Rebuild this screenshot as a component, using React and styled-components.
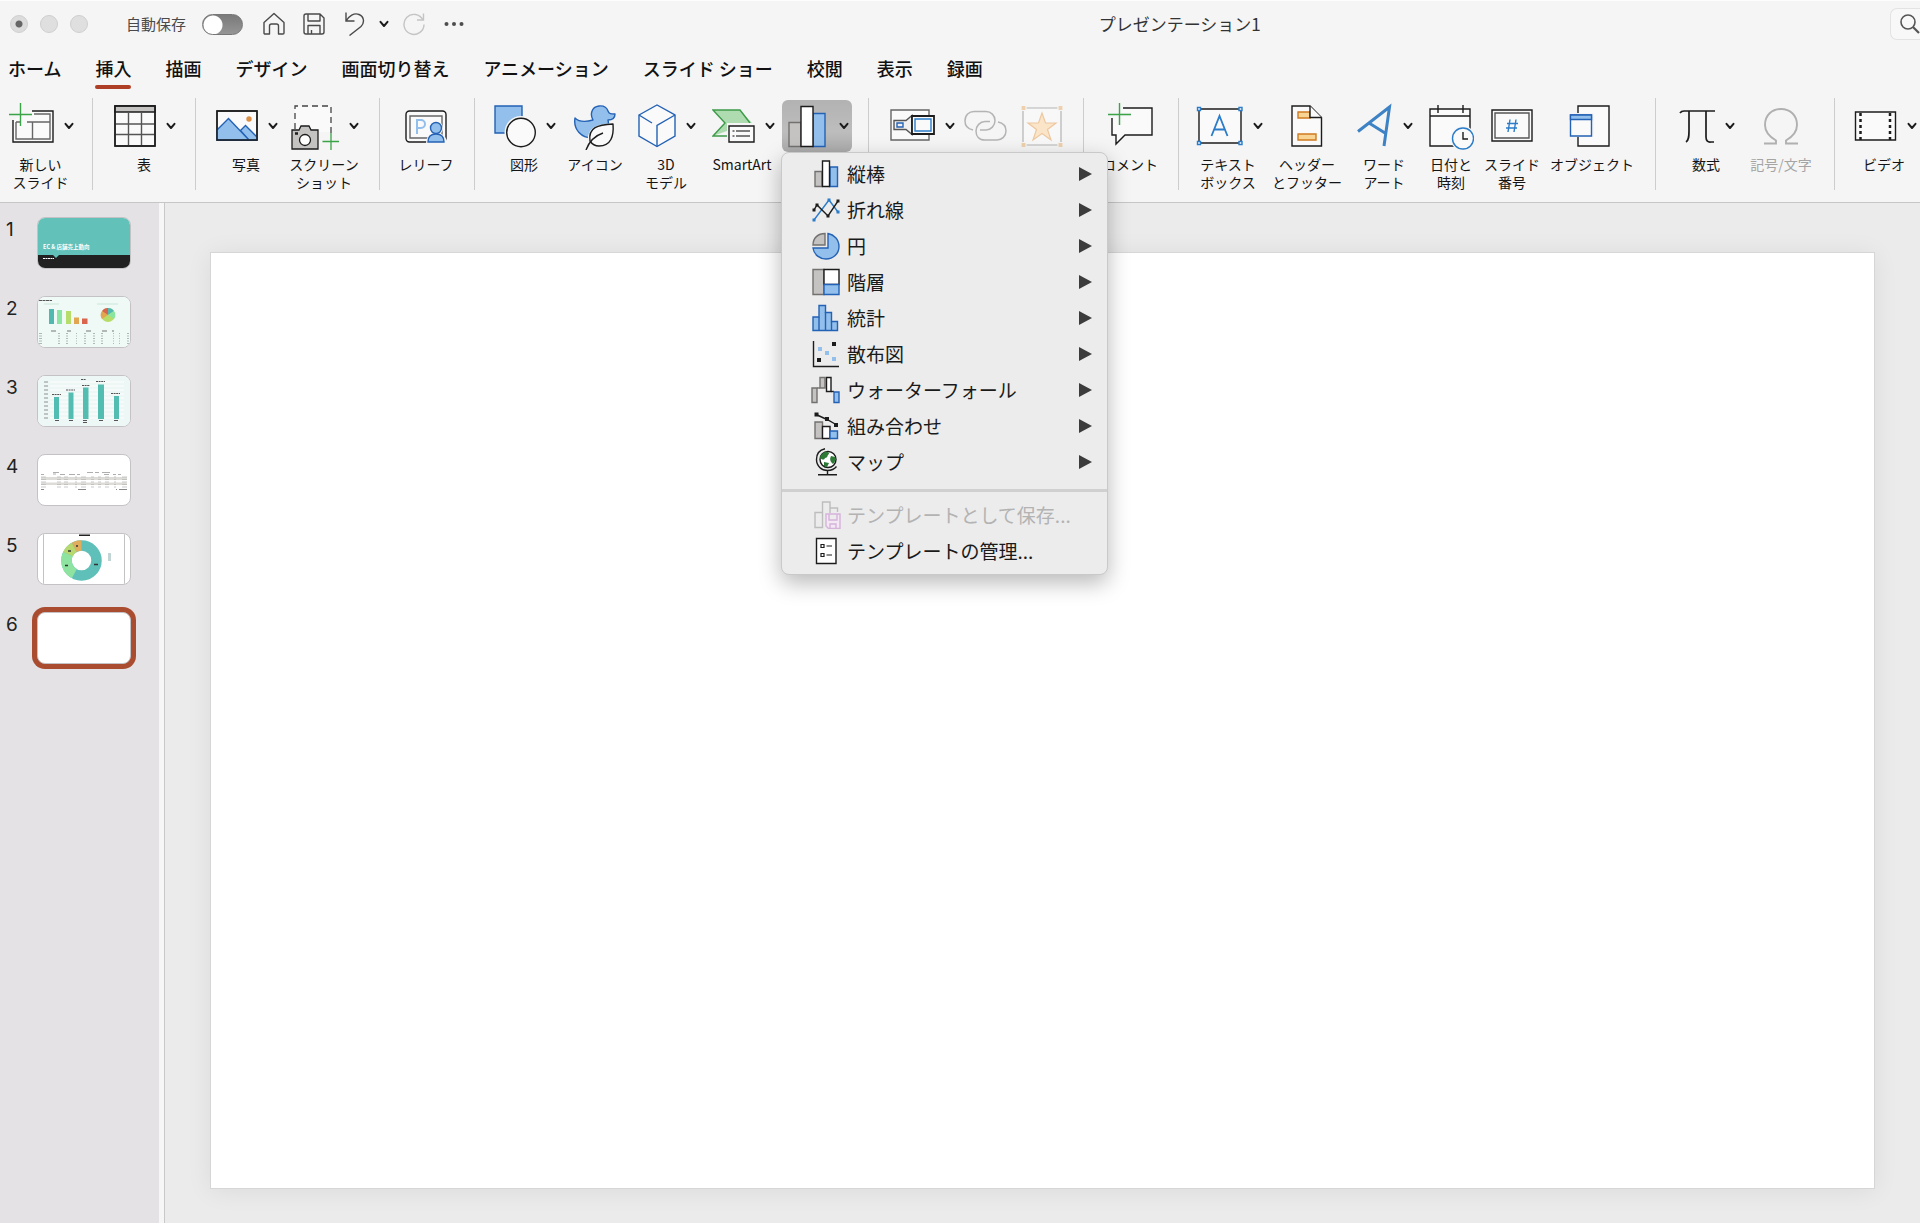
import React from "react";
import styled, { createGlobalStyle, css } from "styled-components";

const Global = createGlobalStyle`
  *, *::before, *::after { box-sizing: border-box; }
  body { margin: 0; background: #f5f5f5; }
  button { font: inherit; color: inherit; background: none; border: 0; padding: 0; margin: 0; }
  svg { display: block; flex: none; }
`;

const Page = styled.div`
  display: flex;
  flex-direction: column;
  height: 100vh;
  overflow: hidden;
  background: #f5f5f5;
  color: #1a1a1a;
  font-family: "Noto Sans CJK JP", "Liberation Sans", sans-serif;
`;

/* ---------- title bar ---------- */
const TitleBar = styled.header`
  display: grid;
  grid-template-columns: 5fr auto 3fr;
  align-items: center;
  height: 47px;
  flex: none;
  border-top: 1px solid #fdfdfd;
`;
const TitleLeft = styled.div`
  display: flex;
  align-items: center;
  padding-left: 10px;
`;
const Lights = styled.div`
  display: flex;
  gap: 12px;
  margin-right: 38px;
`;
const Light = styled.button`
  width: 18px;
  height: 18px;
  border-radius: 50%;
  background: ${(p) => (p.$dot ? "radial-gradient(circle, #666 3px, #dcdcdc 4px)" : "#dfdfdf")};
  border: 1px solid #cfcfcf;
`;
const AutoSave = styled.label`
  display: flex;
  align-items: center;
  gap: 16px;
  font-size: 15px;
  line-height: 20px;
  color: #4a4a4a;
`;
const Toggle = styled.input`
  appearance: none;
  margin: 0;
  width: 41px;
  height: 21px;
  border-radius: 11px;
  background: radial-gradient(circle at 10px 10px, #fff 9px, transparent 10px),
    linear-gradient(#7a7a7a, #959595);
  border: 1px solid #777;
`;
const QuickBar = styled.div`
  display: flex;
  align-items: center;
  margin-left: 11px;
`;
const QuickButton = styled.button`
  display: flex;
  justify-content: center;
  width: ${(p) => (p.$narrow ? "20px" : "40px")};
`;
const DocTitle = styled.h1`
  margin: 0;
  font-size: 17px;
  line-height: 24px;
  font-weight: 400;
  color: #333;
`;
const TitleRight = styled.div`
  display: flex;
  justify-content: flex-end;
  overflow: hidden;
`;
const SearchButton = styled.button`
  display: flex;
  align-items: center;
  width: 30px;
  height: 32px;
  padding-left: 9px;
  border: 1px solid #e3e3e3;
  border-right: 0;
  border-radius: 7px 0 0 7px;
  background: #f8f8f8;
`;

/* ---------- tabs ---------- */
const Tabs = styled.nav`
  display: flex;
  gap: 34px;
  height: 51px;
  flex: none;
  padding: 7px 8px 0;
`;
const Tab = styled.a`
  display: flex;
  flex-direction: column;
  height: 35px;
  font-size: 18px;
  line-height: 28px;
  font-weight: 500;
  color: #111;
  text-decoration: none;
  white-space: nowrap;
  ${(p) =>
    p.$active &&
    css`
      &::after {
        content: "";
        height: 4px;
        margin-top: 3px;
        border-radius: 2px;
        background: #ae3f26;
      }
    `}
`;

/* ---------- ribbon ---------- */
const Ribbon = styled.div`
  display: flex;
  height: 105px;
  flex: none;
  border-bottom: 1px solid #c6c6c6;
`;
const Group = styled.div`
  display: flex;
  flex: none;
  width: ${(p) => p.$w}px;
  height: 92px;
  padding-left: ${(p) => p.$pad || 0}px;
  border-right: ${(p) => (p.$last ? "0" : "1px solid #cdcdcd")};
`;
const ToolSlot = styled.div`
  position: relative;
  width: ${(p) => p.$w}px;
  flex: none;
`;
const Tool = styled.button`
  display: flex;
  flex-direction: column;
  align-items: center;
  width: 100%;
  font-size: 14px;
  line-height: 18px;
  text-align: center;
  white-space: pre;
  color: ${(p) => (p.$off ? "#a5a5a5" : "#141414")};
`;
const ToolIcon = styled.span`
  display: flex;
  align-items: center;
  justify-content: center;
  gap: 10px;
  width: 100%;
  height: 52px;
  margin: 2px 0 3px;
  padding-left: ${(p) => (p.$drop ? "2px" : "0")};
  ${(p) =>
    p.$pressed &&
    css`
      gap: 13px;
      border-radius: 6px;
      background: linear-gradient(#b2b2b2, #bdbdbd 60%, #ababab);
    `}
`;

/* ---------- menu ---------- */
const Menu = styled.div`
  position: absolute;
  z-index: 5;
  top: 54px;
  left: -1px;
  width: 327px;
  padding: 3px 0 5px;
  border: 1px solid #c9c9c9;
  border-radius: 8px;
  background: #ececec;
  box-shadow: 0 8px 22px rgba(0, 0, 0, 0.28);
`;
const MenuItem = styled.button`
  display: grid;
  grid-template-columns: 30px 1fr 14px;
  column-gap: 6px;
  align-items: center;
  width: 100%;
  height: 36px;
  padding: 0 15px 0 29px;
  font-size: 19px;
  line-height: 28px;
  text-align: left;
  white-space: nowrap;
  color: ${(p) => (p.$off ? "#b3b3b3" : "#1a1a1a")};
`;
const Divider = styled.hr`
  height: 3px;
  margin: 9px 0 5px;
  border: 0;
  background: #d0d0d0;
`;

/* ---------- work area ---------- */
const Work = styled.main`
  display: flex;
  flex: 1;
  min-height: 0;
`;
const Sidebar = styled.aside`
  width: 159px;
  flex: none;
  padding: 14px 0 0 6px;
  background: #e4e2e5;
`;
const Splitter = styled.div`
  width: 6px;
  flex: none;
  background: #f6f6f6;
  border-right: 1px solid #c8c8c8;
`;
const SlideList = styled.ol`
  display: flex;
  flex-direction: column;
  gap: 27px;
  margin: 0;
  padding: 0;
  list-style: none;
`;
const SlideRow = styled.li`
  display: grid;
  grid-template-columns: 31px 94px;
  height: 52px;
  font-family: Inter, "Liberation Sans", sans-serif;
  font-size: 19px;
  line-height: 26px;
  color: #222;
`;
const Thumb = styled.button`
  width: 94px;
  height: 52px;
  border: 1px solid #c4c2c5;
  border-radius: 8px;
  background: #fff;
  overflow: hidden;
  ${(p) =>
    p.$selected &&
    css`
      box-shadow: 0 0 0 5px #a94c2f;
    `}
`;
const Stage = styled.section`
  flex: 1;
  min-width: 0;
  padding: 49px 45px 34px;
  background: #ebebeb;
`;
const Slide = styled.div`
  aspect-ratio: 16 / 9;
  background: #fff;
  border: 1px solid #d6d6d6;
  box-shadow: 0 2px 24px rgba(0, 0, 0, 0.07);
`;

/* ---------- icons ---------- */
const K = "#1c1c1c";
const B = "#2462b5";
const LB = "#92bfeb";
const G = "#c4c3c1";
const GK = "#73716f";
const GREEN = "#3ba348";

const Icon = ({ w, h = 48, children, ...rest }) => (
  <svg width={w} height={h} viewBox={`0 0 ${w} ${h}`} fill="none" stroke={K} strokeWidth="1.4" aria-hidden="true" {...rest}>
    {children}
  </svg>
);
const Chevron = () => (
  <Icon w={10} h={8} strokeWidth="2" strokeLinecap="round" strokeLinejoin="round">
    <path d="M1.5 1.8 5 6l3.500-4.200" />
  </Icon>
);
const Bars = ({ w = 38, h = 48 }) => (
  <svg width={w} height={h} viewBox="0 0 38 48" fill="none" strokeWidth="1.4" aria-hidden="true">
    <path d="M1 20.500h12v24H1z" fill={G} stroke={GK} />
    <path d="M25 11.500h12v33H25z" fill={LB} stroke={B} />
    <path d="M13 4.500h12v40H13z" fill="#fff" stroke={K} />
  </svg>
);

const icons = {
  newSlide: (
    <Icon w={45}>
      <path d="M23 9h21v31H4V18" fill="#fafafa" />
      <path d="M25 12h16v25H7V20M18 20h23M23.500 20v17M7 20h4" stroke="#666" />
      <path d="M11.500 1v23M0 12.500h23" stroke={GREEN} />
    </Icon>
  ),
  table: (
    <Icon w={42}>
      <path d="M1 4h40v40H1z" fill="#fafafa" />
      <path d="M1 4h40v6H1z" fill={G} />
      <path d="M14.500 10v34M27.500 10v34M1 22h40M1 32.500h40" stroke="#555" />
      <path d="M1 4h40v40H1z" />
    </Icon>
  ),
  photo: (
    <Icon w={42}>
      <path d="M1 9h40v29H1z" fill="#fafafa" />
      <path d="m1 28 11.500-11.500L33 38H1zM24.500 28.500l5-5L41 35v3h-8z" fill={LB} stroke={B} />
      <circle cx="33" cy="17" r="2.700" fill="#dd8f45" stroke="none" />
      <path d="M1 9h40v29H1z" />
    </Icon>
  ),
  screenshot: (
    <Icon w={48} strokeWidth="1.3">
      <path d="M4 4h36v26H4z" fill="#fafafa" stroke="none" />
      <path d="M4 27V4h36v27" strokeDasharray="6 4" stroke="#444" />
      <path d="M1 28h7l2-4h8l2 4h7v19H1z" fill={G} />
      <circle cx="14" cy="38" r="5.500" fill="#fff" />
      <path d="M4 31.500h3" strokeWidth="2.500" />
      <path d="M40 31v17M31.500 39.500h17" stroke={GREEN} />
    </Icon>
  ),
  cameo: (
    <Icon w={42}>
      <rect x="1" y="9" width="40" height="31" rx="3.500" fill="#fafafa" />
      <path d="M5 14h32v22H5z" stroke="#666" />
      <path d="M12 32V18h4a4 4 0 0 1 0 8h-4" stroke={LB} strokeWidth="2" />
      <path d="M21 42c0-8 4-11 10-11s11 3 11 11z" fill="#f5f5f5" stroke="none" />
      <circle cx="31" cy="26" r="7" fill="#fafafa" stroke="none" />
      <circle cx="31" cy="26" r="5.500" fill={LB} stroke={B} />
      <path d="M23 40c0-5 3-8 8-8s8 3 8 8z" fill={LB} stroke={B} />
    </Icon>
  ),
  shapes: (
    <Icon w={42}>
      <path d="M1 4h27v27H1z" fill={LB} stroke={B} />
      <circle cx="27" cy="30.500" r="16.500" fill="#f5f5f5" stroke="none" />
      <circle cx="27" cy="30.500" r="14.300" fill="#fafafa" />
    </Icon>
  ),
  duck: (
    <Icon w={42} strokeLinejoin="round">
      <path d="M1 16c4 4 11 4 18 2-3-5-2-13 6-14 5-.5 8 2 9 5 1 3 3 3 7 3 0 4-3 6-7 6 2 8-4 18-16 18C8 36-1 28 1 16z" fill={LB} stroke={B} />
      <path d="M13 44c1-5 0-10 3-15 5-7 14-7 25-8 2 12-2 27-18 25z" fill="#f5f5f5" stroke="none" />
      <path d="M16 39c-2-14 8-16 23-17 1 12-2 22-14 22-4 0-7-2-9-5z" fill="#fafafa" />
      <path d="M12 48c3-8 8-14 17-17" />
    </Icon>
  ),
  cube: (
    <Icon w={38}>
      <path d="M1 13 19 3l18 10v21L19 44.500 1 34z" fill="#fafafa" stroke={B} />
      <path d="m1 13 13 8M37 13l-18 10.500v21" stroke={B} />
    </Icon>
  ),
  smartArt: (
    <Icon w={43}>
      <path d="M1 8h27l12 13v8H15L1 34l12-13z" fill="#aedcb0" stroke="none" />
      <path d="M38 21 28 8H1l12 13L1 34h15" stroke="#3e9b4a" />
      <path d="M15 21h28v21H15z" fill="#f5f5f5" stroke="none" />
      <path d="M17 24h25v16H17z" fill="#fafafa" />
      <path d="M20.500 29h2M20.500 34h2M24 29h14M24 34h14" stroke="#555" />
    </Icon>
  ),
  zoom: (
    <Icon w={45}>
      <path d="M1 8h38v30H1z" fill="#fafafa" stroke="#666" />
      <path d="M4 18.500h12l6-5v19l-6-5H4z" fill="#f0f0f0" stroke="#555" />
      <path d="M7 21h6v4H7z" stroke={B} />
      <path d="M22 14h22v18H22z" fill="#fafafa" strokeWidth="1.800" />
      <path d="M25 17h16v12H25z" stroke="#2b7cc9" />
    </Icon>
  ),
  link: (
    <Icon w={43} stroke="#b4b4b4" strokeWidth="1.500">
      <path d="M9 28C4 27 1 24 1 19c0-6 4-9.500 9-9.500h12c5 0 9 4 9 9s-4 9.500-9 9.500h-6" />
      <path d="M34 20c5 1 8 4 8 9 0 5-4 9-9 9H21c-6 0-9-4-9-9s4-9.500 9-9.500h5" />
    </Icon>
  ),
  action: (
    <Icon w={42} stroke="#b4b4b4" strokeWidth="1.200">
      <path d="M2 6h38v37H2z" fill="#f8f8f8" />
      <path d="m21 11 3.500 10H35l-8.500 6.500L30 38l-9-6.500L12 38l3.500-10.500L7 21h10.500z" fill="#fbe5c8" stroke="#edc8a0" />
      <path d="M0 3.500h5v5H0zM37 3.500h5v5h-5zM0 40.500h5v5H0zM37 40.500h5v5h-5z" fill="#eed0ac" stroke="#f5f5f5" />
    </Icon>
  ),
  comment: (
    <Icon w={45}>
      <path d="M15 6h29v27H17l-9 9v-9H4V16" fill="#fafafa" />
      <path d="M11.500 1v22M0 12.500h23" stroke="#f5f5f5" strokeWidth="4" />
      <path d="M11.500 1v22M0 12.500h23" stroke={GREEN} />
    </Icon>
  ),
  textBox: (
    <Icon w={47}>
      <path d="M3 7h42v34H3z" fill="#fafafa" />
      <path d="m15.500 34 8-20 8 20M18 27.500h11" stroke="#2b7cc9" strokeWidth="1.800" />
      <path d="M1.500 5.500h3v3h-3zM43 5.500h3v3h-3zM1.500 39.500h3v3h-3zM43 39.500h3v3h-3z" fill="#fff" stroke="#2b7cc9" />
    </Icon>
  ),
  header: (
    <Icon w={32}>
      <path d="M1 4h18l11.500 11.500V44H1z" fill="#fafafa" />
      <path d="M7 10h12v6H7zM7 32h18v6H7z" fill="#f8d594" stroke="#cf7b20" />
      <path d="M19 4v11.500h11.500" fill="#fafafa" />
    </Icon>
  ),
  wordArt: (
    <Icon w={36} stroke="#3c82c5" strokeWidth="3">
      <path d="M1 29.500 32.500 5 27 44M12 21l16 10" />
    </Icon>
  ),
  date: (
    <Icon w={45}>
      <path d="M1 7h40v37H1z" fill="#fafafa" />
      <path d="M1 14h40M9 3v8M34 3v8" />
      <circle cx="34" cy="36.500" r="12.500" fill="#f5f5f5" stroke="none" />
      <circle cx="34" cy="36.500" r="10.500" fill="#fafafa" stroke="#2b7cc9" />
      <path d="M34 30v7h5" />
    </Icon>
  ),
  number: (
    <Icon w={42}>
      <path d="M1 8h40v31H1z" fill="#fafafa" />
      <path d="M4 11h34v25H4z" stroke="#555" />
      <path d="M19 17.500 17 30M25 17.500 23 30M16 21.500h11M15 26h11" stroke="#2b7cc9" />
    </Icon>
  ),
  object: (
    <Icon w={46}>
      <path d="M9 4h31v40H9z" fill="#fafafa" />
      <path d="M0 11h25v24H0z" fill="#f5f5f5" stroke="none" />
      <path d="M1.500 13h21v21h-21z" fill="#fafafa" stroke={B} />
      <path d="M1.500 13h21v4.500h-21z" fill={LB} stroke={B} />
    </Icon>
  ),
  pi: (
    <Icon w={36} strokeWidth="1.700">
      <path d="M1 11c1-1.500 2-2 4-2h31M10 9v20c0 5 0 9-3 11M27 9v26c0 4 2 5.500 5 5h3" />
    </Icon>
  ),
  omega: (
    <Icon w={36} stroke="#b0b0b0" strokeWidth="1.900">
      <path d="M1 41.500h12v-3C7 35 2 30 2 23 2 13 9 7 18 7s16 6 16 16c0 7-5 12-11 15.500v3h12" />
    </Icon>
  ),
  video: (
    <Icon w={43}>
      <path d="M1.500 10h40v28h-40z" fill="#fafafa" />
      <path d="M6.500 11v27M36 11v27" strokeWidth="2.500" strokeDasharray="3 3" />
    </Icon>
  ),
};

const MIcon = ({ children }) => (
  <Icon w={30} h={28}>
    {children}
  </Icon>
);
const dots = (pts, s, fill) =>
  pts.map(([x, y], i) => <rect key={i} x={x - s / 2} y={y - s / 2} width={s} height={s} fill={fill} stroke="none" />);

const menuIcons = {
  column: (
    <MIcon>
      <path d="M4 11.500h7v15H4z" fill={G} stroke={GK} />
      <path d="M19 7h7.500v19.500H19z" fill={LB} stroke={B} />
      <path d="M11.500 1h7v25.500h-7z" fill="#fff" />
    </MIcon>
  ),
  line: (
    <MIcon>
      <path d="m3 24 15-20 9 12" stroke="#2b7cc9" />
      <path d="m3 14 3-5 11 11L27 5" />
      {dots([[3, 24], [18, 4], [27, 16]], 3, "#2b7cc9")}
      {dots([[3, 14], [6, 9], [17, 20], [27, 5]], 3, K)}
    </MIcon>
  ),
  pie: (
    <MIcon>
      <path d="M14 1.500V13H2C2 6 7 1.500 14 1.500z" fill={G} stroke={GK} />
      <path d="M17 1.500V16H2c1 7 7 11 13 11 7 0 13-5 13-12.500 0-7-5-12-11-13z" fill={LB} stroke={B} />
    </MIcon>
  ),
  tree: (
    <MIcon>
      <path d="M2 1.500h11v25H2z" fill={G} stroke={GK} />
      <path d="M13 1.500h15v15H13z" fill="#fff" />
      <path d="M13 16.500h15v10H13z" fill={LB} stroke={B} />
    </MIcon>
  ),
  histogram: (
    <MIcon>
      <path d="M2 26.500V13h6V1.500h6.500v7h6v9h6v9z" fill={LB} stroke={B} />
      <path d="M8 13v13.500M14.500 8v18.500M20.500 17v9.500" stroke={B} />
    </MIcon>
  ),
  scatter: (
    <MIcon>
      <path d="M2.500 1v25.500H28" />
      {dots([[9, 9], [16, 13], [23, 19]], 4, LB)}
      {dots([[23, 4], [8, 20]], 4, K)}
    </MIcon>
  ),
  waterfall: (
    <MIcon>
      <path d="M1 12h5v14.500H1zM9 1.500h5V12H9z" fill={G} stroke={GK} />
      <path d="M6 12h3" stroke={GK} />
      <path d="M15.500 1.500h4.500v14h-4.500z" fill="#fff" />
      <path d="M20 15.500h3" />
      <path d="M23 16h5v10.500h-5z" fill={LB} stroke={B} />
    </MIcon>
  ),
  combo: (
    <MIcon>
      <path d="M4 10h7.500v16.500H4z" fill={G} stroke={GK} />
      <path d="M11.500 14.500H19v12h-7.500z" fill="#fff" />
      <path d="M19 19h7.500v7.500H19z" fill={LB} stroke={B} />
      <path d="m5 2.500 11 5 9 5" />
      {dots([[5.500, 2.500], [16, 7], [25, 13]], 4, K)}
    </MIcon>
  ),
  map: (
    <MIcon>
      <circle cx="17" cy="11.500" r="8" fill="#fff" />
      <path d="M11 6c3-3 7-3 7 0-2 1-1 4-4 4-1 3-4 1-5 0 0-2 1-3 2-4zM20 8l4 1c1 3 0 5-2 7-2-2-4-4-2-8zM13 14l5 1-2 4-3-1z" fill="#2c7a36" stroke="none" />
      <path d="M14 .7C8 2 5.500 6.500 5.500 11.500c0 6.500 5 11 11 11 4 0 7-1.500 9-4M16.500 22.500v3.500M7 26.800h19" />
    </MIcon>
  ),
  saveTemplate: (
    <MIcon>
      <path d="M4 11.500h7.500v15H4zM11.500 12V1h7.500v11M19 7h7.500v4" stroke="#bdbdbd" />
      <path d="M15 13h14v14.500H17.500L15 25zM18 13v6h8v-6M19 27.500V23h6v4.500" fill="#f3e8f4" stroke="#d5b3da" />
    </MIcon>
  ),
  manage: (
    <MIcon>
      <path d="M5.500 1.500H25v25H5.500z" fill="#fff" />
      <path d="M10 7.500h3v3h-3zM10 16.500h3v3h-3zM15.500 9H21M15.500 18H21" strokeWidth="1.200" />
    </MIcon>
  ),
};

const Arrow = () => (
  <Icon w={14} h={16} stroke="none">
    <path d="M1 1v14l13-7z" fill="#3c3c3c" />
  </Icon>
);

const menuTop = [
  ["column", "縦棒"],
  ["line", "折れ線"],
  ["pie", "円"],
  ["tree", "階層"],
  ["histogram", "統計"],
  ["scatter", "散布図"],
  ["waterfall", "ウォーターフォール"],
  ["combo", "組み合わせ"],
  ["map", "マップ"],
];

const ChartMenu = () => (
  <Menu role="menu">
    {menuTop.map(([id, label]) => (
      <MenuItem key={id} role="menuitem">
        {menuIcons[id]}
        <span>{label}</span>
        <Arrow />
      </MenuItem>
    ))}
    <Divider />
    <MenuItem role="menuitem" disabled $off>
      {menuIcons.saveTemplate}
      <span>テンプレートとして保存...</span>
    </MenuItem>
    <MenuItem role="menuitem">
      {menuIcons.manage}
      <span>テンプレートの管理...</span>
    </MenuItem>
  </Menu>
);

const groups = [
  { w: 93, tools: [{ icon: "newSlide", label: "新しい\nスライド", w: 81, drop: true }] },
  { w: 103, tools: [{ icon: "table", label: "表", w: 102, drop: true }] },
  {
    w: 184,
    pad: 11,
    tools: [
      { icon: "photo", label: "写真", w: 78, drop: true },
      { icon: "screenshot", label: "スクリーン\nショット", w: 78, drop: true },
    ],
  },
  { w: 95, tools: [{ icon: "cameo", label: "レリーフ", w: 92 }] },
  {
    w: 394,
    pad: 13,
    tools: [
      { icon: "shapes", label: "図形", w: 72, drop: true },
      { icon: "duck", label: "アイコン", w: 70 },
      { icon: "cube", label: "3D\nモデル", w: 72, drop: true },
      { icon: "smartArt", label: "SmartArt", w: 80, drop: true },
      { icon: "chart", name: "グラフ", w: 70, drop: true, menu: true },
    ],
  },
  {
    w: 215,
    pad: 20,
    tools: [
      { icon: "zoom", name: "ズーム", w: 64, drop: true },
      { icon: "link", name: "リンク", w: 64, off: true },
      { icon: "action", name: "動作", w: 50, off: true },
    ],
  },
  { w: 95, tools: [{ icon: "comment", label: "コメント", w: 92 }] },
  {
    w: 477,
    pad: 9,
    tools: [
      { icon: "textBox", label: "テキスト\nボックス", w: 80, drop: true },
      { icon: "header", label: "ヘッダー\nとフッター", w: 78 },
      { icon: "wordArt", label: "ワード\nアート", w: 76, drop: true },
      { icon: "date", label: "日付と\n時刻", w: 58 },
      { icon: "number", label: "スライド\n番号", w: 64 },
      { icon: "object", label: "オブジェクト", w: 96 },
    ],
  },
  {
    w: 179,
    pad: 12,
    tools: [
      { icon: "pi", label: "数式", w: 76, drop: true },
      { icon: "omega", label: "記号/文字", w: 74, off: true },
    ],
  },
  { w: 98, last: true, tools: [{ icon: "video", label: "ビデオ", w: 98, drop: true }] },
];

const tabs = ["ホーム", "挿入", "描画", "デザイン", "画面切り替え", "アニメーション", "スライド ショー", "校閲", "表示", "録画"];

/* ---------- slide previews ---------- */
const Preview = ({ children }) => (
  <svg width="92" height="50" viewBox="0 0 92 50" aria-hidden="true">
    {children}
  </svg>
);
const cols = (n, from, step) => Array.from({ length: n }, (_, i) => from + i * step);

const previews = [
  <Preview>
    <path d="M0 0h92v38H0z" fill="#62c1b9" />
    <path d="M0 37h92v13H0z" fill="#212121" />
    <path d="M15 37h6l-3 3z" fill="#62c1b9" />
    <text x="5" y="31" fontSize="5.500" fontWeight="700" fill="#fff" fontFamily="Noto Sans CJK JP, sans-serif">
      EC &amp; 店舗売上動向
    </text>
    <path d="M5 40.500h11" stroke="#fff" strokeWidth="1.200" strokeDasharray="2 .5" />
  </Preview>,
  <Preview>
    <path d="M0 0h92v50H0z" fill="#effaf7" />
    <path d="M1 3.500h13" stroke="#555" strokeDasharray="3 .5" />
    <path d="M6 7h15M59 7h21" stroke="#c9e6d8" />
    <path d="M11 12h5v15h-5z" fill="#52b9b0" />
    <path d="M19 13h5v14h-5z" fill="#8be5a2" />
    <path d="M28 14h5v13h-5z" fill="#b6dc6a" />
    <path d="M36 20.500h5V27h-5z" fill="#e2a650" />
    <path d="M44 21.500h5.500V27H44z" fill="#d9654e" />
    <circle cx="70" cy="18" r="7" fill="#b6dc6a" />
    <path d="M70 18v-7a7 7 0 0 1 6 3z" fill="#52b9b0" />
    <path d="M70 18l6-4a7 7 0 0 1 0 8z" fill="#8be5a2" />
    <path d="M70 18l-6 4a7 7 0 0 1 0-8z" fill="#e2a650" />
    <path d="M70 18l-6-4a7 7 0 0 1 6-3z" fill="#d9654e" />
    <path d="M13 34h5M29 34h4M48 34h5M64 34h5M74 34h2" stroke="#777" />
    {cols(5, 36.5, 2.5).map((y) => (
      <path key={y} d={`M1 ${y}h3M20 ${y}h2M28 ${y}h2M38 ${y}h1M46 ${y}h2M55 ${y}h2M63 ${y}h2M75 ${y}h1M81 ${y}h1M89 ${y}h2`} stroke="#9aa8a4" strokeWidth=".8" />
    ))}
  </Preview>,
  <Preview>
    <path d="M0 0h92v50H0z" fill="#edf7f5" />
    {cols(10, 6, 4).map((y) => (
      <path key={y} d={`M12 ${y}h74`} stroke="#fff" />
    ))}
    {cols(10, 6, 4).map((y) => (
      <path key={`l${y}`} d={`M6 ${y}h4`} stroke="#777" strokeWidth=".8" />
    ))}
    <path d="M16 21h5v22h-5zM30.500 16.500h5V43h-5zM45 11.500h5.500V43H45zM60 8.500h6V43h-6zM76 20h5v23h-5z" fill="#53bdb2" />
    <path d="M14 18.500h9M28 14h9M44 9.500h8M58 5.500h9M73 17.500h9M43 3.500h5" stroke="#555" strokeDasharray="2 .6" />
    <path d="M17 44.500h4M31 44.500h4M45 44.500h4M61 44.500h4M76 44.500h4M45 46.500h4" stroke="#555" />
  </Preview>,
  <Preview>
    <path d="M3 22h86v3H3zM3 27.500h86v2.500H3z" fill="#dddcd8" />
    <path d="M3 19.500h3M15 17.500h6M15 19h3M22 19.500h5M31 19.500h6M39 19.500h3M49 17.500h6M57 17.500h4M64 17.500h8M66 19.500h5M75 19.500h3M80 19.500h3" stroke="#999" strokeWidth=".8" />
    {cols(5, 22, 2.5).map((y) => (
      <path key={y} d={`M3 ${y}h5M19 ${y}h4M26 ${y}h4M37 ${y}h2M43 ${y}h5M53 ${y}h3M60 ${y}h3M67 ${y}h4M76 ${y}h2M84 ${y}h5`} stroke="#bbb" strokeWidth=".8" />
    ))}
    <path d="M3 34.500h3M40 34.500h8M78 34.500h1M81 34.500h8" stroke="#888" />
  </Preview>,
  <Preview>
    <path d="M5.500 0v50M86.500 0v50" stroke="#c4c2c5" />
    <path d="M41 1.300h11" stroke="#222" strokeWidth="1.500" />
    <g fill="none" strokeWidth="10.500" transform="rotate(-90 43.500 26.500)">
      <circle cx="43.500" cy="26.500" r="15" stroke="#5fc0b9" />
      <circle cx="43.500" cy="26.500" r="15" stroke="#8fe3a1" pathLength="100" strokeDasharray="24 76" strokeDashoffset="-58" />
      <circle cx="43.500" cy="26.500" r="15" stroke="#b7d86f" pathLength="100" strokeDasharray="10 90" strokeDashoffset="-82" />
      <circle cx="43.500" cy="26.500" r="15" stroke="#e0ad5c" pathLength="100" strokeDasharray="8 92" strokeDashoffset="-92" />
    </g>
    <path d="M56 30.500h4M27 31.500h3M30 17h3M38 12h2" stroke="#333" strokeWidth="1.600" />
    <path d="M70 20h3M70 22h3M70 24h3M70 26h3" stroke="#8aa" />
  </Preview>,
  null,
];

export default function App() {
  return (
    <Page>
      <Global />
      <TitleBar>
        <TitleLeft>
          <Lights>
            <Light $dot aria-label="閉じる" />
            <Light aria-label="しまう" />
            <Light aria-label="拡大" />
          </Lights>
          <AutoSave>
            自動保存
            <Toggle type="checkbox" role="switch" />
          </AutoSave>
          <QuickBar>
            <QuickButton aria-label="ホーム">
              <Icon w={24} h={24} stroke="#4a4a4a" strokeLinejoin="round">
                <path d="M2 10.500 12 1.500l10 9V21a1 1 0 0 1-1 1h-4.500v-8a2 2 0 0 0-2-2h-5a2 2 0 0 0-2 2v8H3a1 1 0 0 1-1-1z" />
              </Icon>
            </QuickButton>
            <QuickButton aria-label="保存">
              <Icon w={24} h={24} stroke="#4a4a4a" strokeLinejoin="round">
                <path d="M4 2h14l4 4v14a2 2 0 0 1-2 2H4a2 2 0 0 1-2-2V4a2 2 0 0 1 2-2zM6 2v7h12V2M6 22v-8.500h12V22M9.500 22v-4" />
              </Icon>
            </QuickButton>
            <QuickButton aria-label="元に戻す">
              <Icon w={24} h={24} stroke="#4a4a4a">
                <path d="M4 .5V9h8.500M4 9c3-5 8-8.500 13-6.500 5 2 6 8 2 12L7.500 23.500" />
              </Icon>
            </QuickButton>
            <QuickButton aria-label="元に戻す一覧" $narrow>
              <Chevron />
            </QuickButton>
            <QuickButton aria-label="やり直し">
              <Icon w={24} h={24} stroke="#c4c4c4">
                <path d="M21.500 1.500V8H15M21 8A10 10 0 1 0 22 12.500" />
              </Icon>
            </QuickButton>
            <QuickButton aria-label="その他">
              <Icon w={20} h={6} stroke="none" fill="#4d4d4d">
                <circle cx="2.500" cy="3" r="2" />
                <circle cx="10" cy="3" r="2" />
                <circle cx="17.500" cy="3" r="2" />
              </Icon>
            </QuickButton>
          </QuickBar>
        </TitleLeft>
        <DocTitle>プレゼンテーション1</DocTitle>
        <TitleRight>
          <SearchButton aria-label="検索">
            <Icon w={20} h={20} stroke="#555" strokeWidth="1.600">
              <circle cx="8" cy="8" r="7" />
              <path d="m13 13 6 6" strokeWidth="2.200" />
            </Icon>
          </SearchButton>
        </TitleRight>
      </TitleBar>

      <Tabs>
        {tabs.map((t) => (
          <Tab key={t} href="#" $active={t === "挿入"}>
            {t}
          </Tab>
        ))}
      </Tabs>

      <Ribbon>
        {groups.map((g, i) => (
          <Group key={i} $w={g.w} $pad={g.pad} $last={g.last}>
            {g.tools.map((t) => (
              <ToolSlot key={t.icon} $w={t.w}>
                <Tool $off={t.off} disabled={t.off} aria-label={t.name}>
                  <ToolIcon $drop={t.drop} $pressed={t.menu}>
                    {t.icon === "chart" ? <Bars /> : icons[t.icon]}
                    {t.drop && <Chevron />}
                  </ToolIcon>
                  {t.label}
                </Tool>
                {t.menu && <ChartMenu />}
              </ToolSlot>
            ))}
          </Group>
        ))}
      </Ribbon>

      <Work>
        <Sidebar>
          <SlideList>
            {previews.map((p, i) => (
              <SlideRow key={i}>
                <span>{i + 1}</span>
                <Thumb $selected={i === 5} aria-label={`スライド ${i + 1}`}>
                  {p}
                </Thumb>
              </SlideRow>
            ))}
          </SlideList>
        </Sidebar>
        <Splitter />
        <Stage>
          <Slide />
        </Stage>
      </Work>
    </Page>
  );
}
